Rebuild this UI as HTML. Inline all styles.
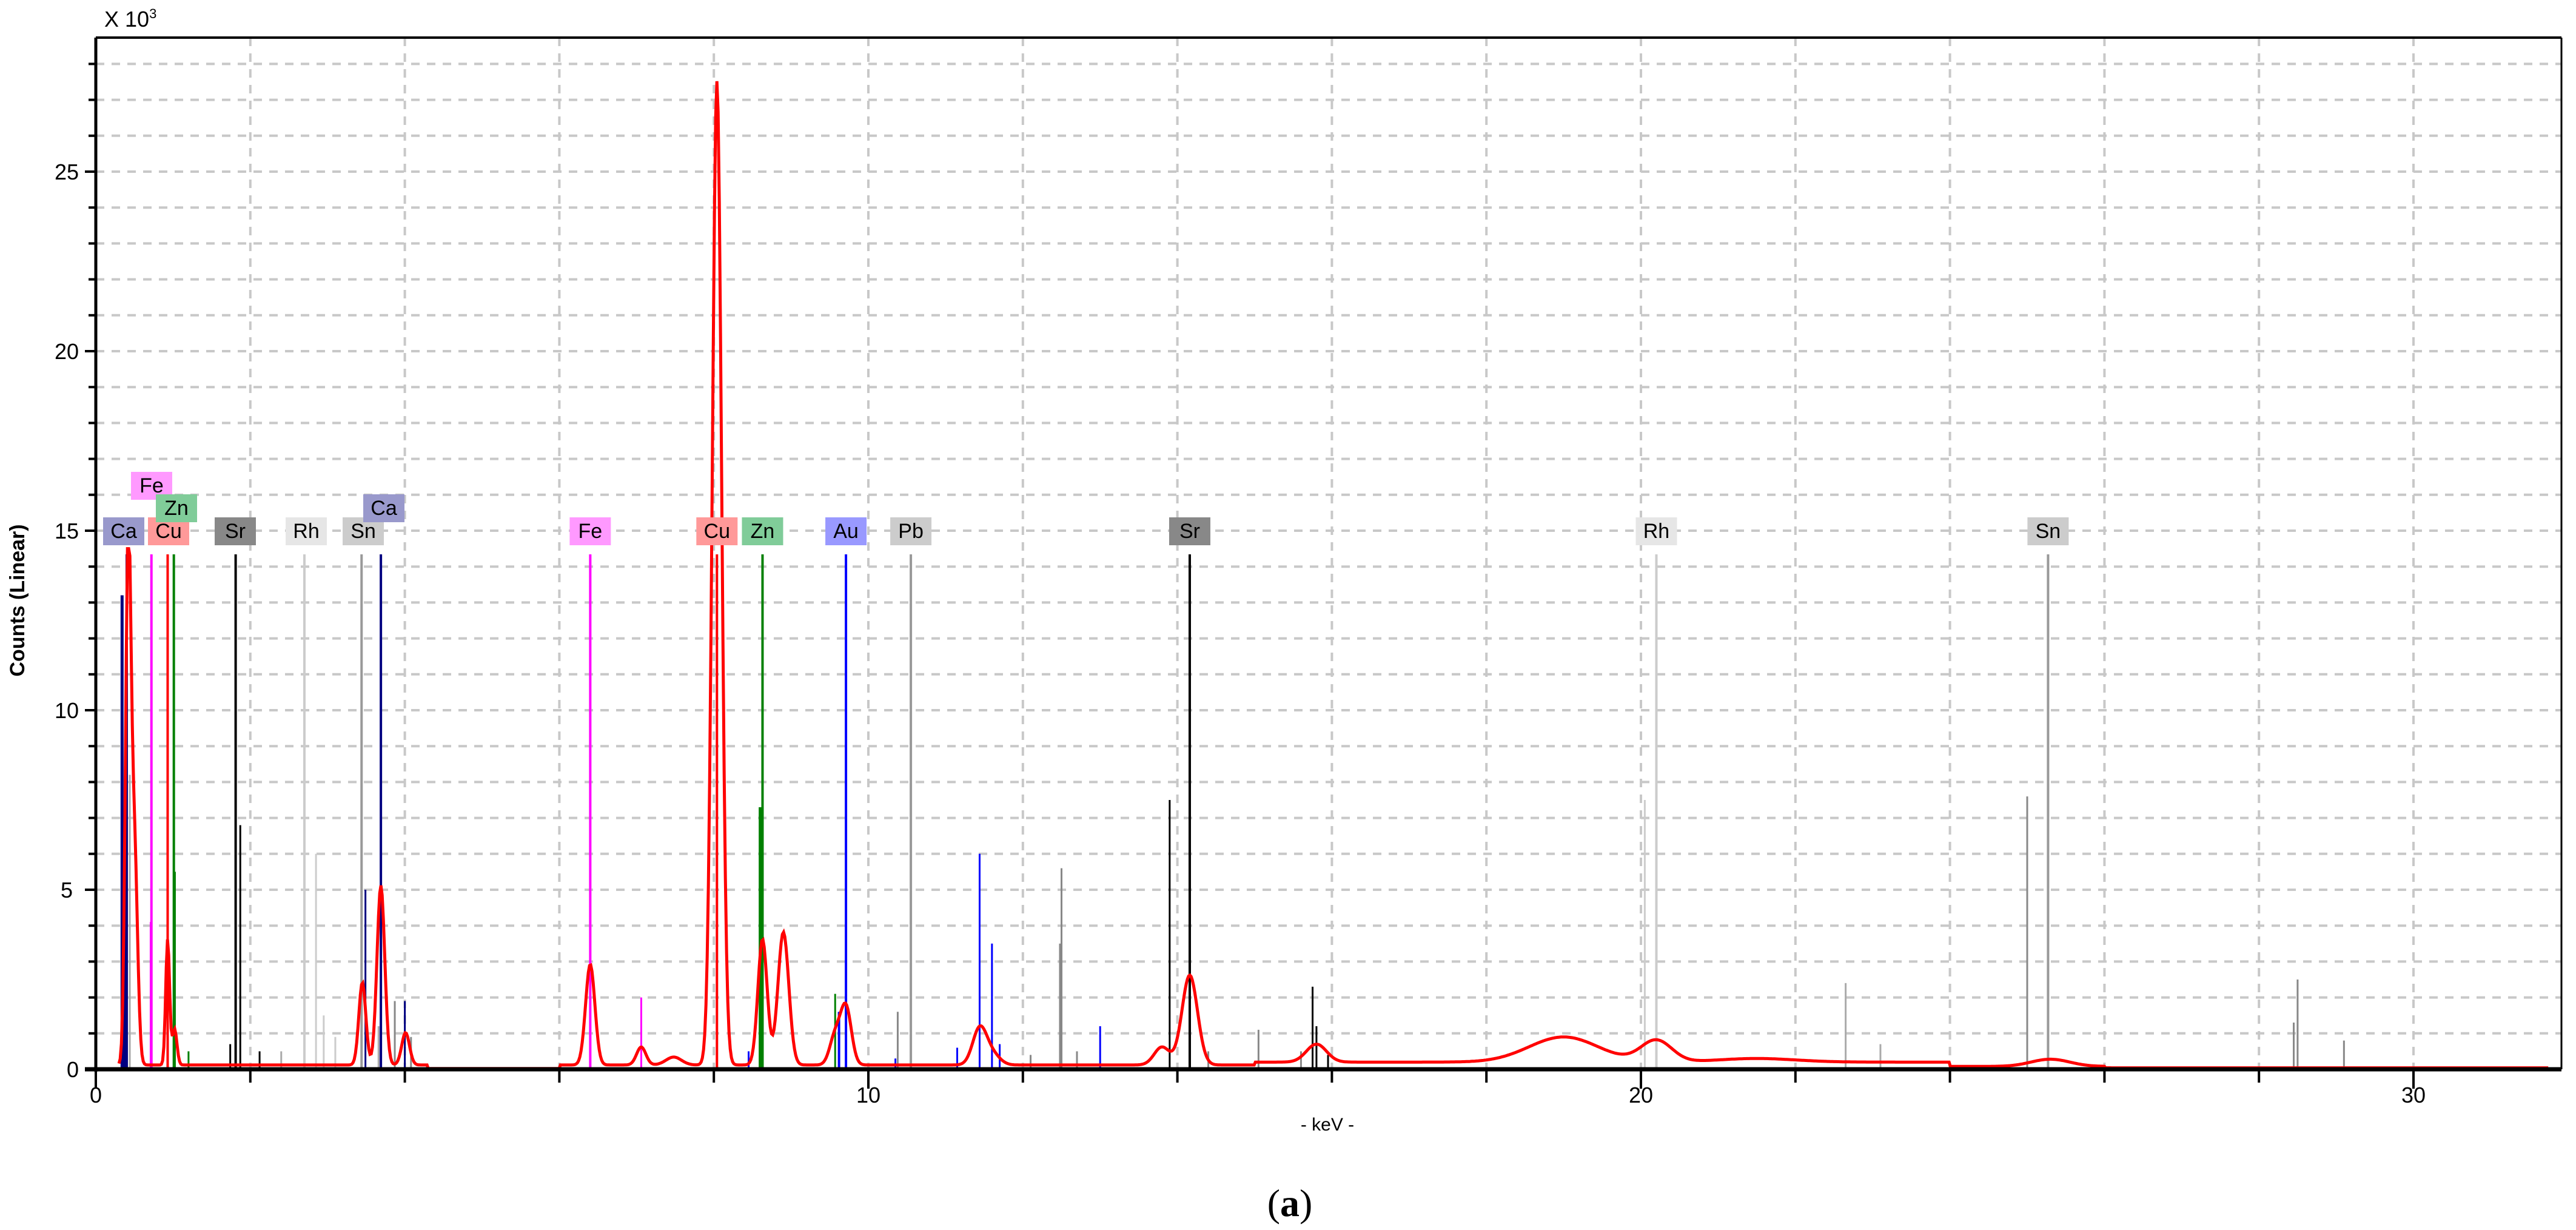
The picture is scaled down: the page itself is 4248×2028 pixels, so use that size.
<!DOCTYPE html>
<html><head><meta charset="utf-8">
<style>
html,body{margin:0;padding:0;background:#fff;}
body{width:4248px;height:2028px;overflow:hidden;}
svg{display:block;}
</style></head>
<body>
<svg id="s" width="4248" height="2028" viewBox="0 0 4248 2028" xmlns="http://www.w3.org/2000/svg" font-family="'Liberation Sans', sans-serif">
<g id="grid" stroke="#c8c8c8" stroke-width="4" stroke-dasharray="14,12"></g>
<g id="stems"></g>
<path id="spec" fill="none" stroke="#ff0000" stroke-width="5"/>
<g id="labels" font-size="34" text-anchor="middle"></g>
<g id="axes" stroke="#000"></g>
<text x="172" y="44" font-size="36">X 10<tspan font-size="22" dy="-14">3</tspan></text>
<text transform="translate(40,990) rotate(-90)" font-size="34" font-weight="bold" text-anchor="middle">Counts (Linear)</text>
<text x="2189" y="1864" font-size="30" text-anchor="middle">- keV -</text>
<text x="2127" y="2005" font-size="64" text-anchor="middle" font-family="'Liberation Serif', serif">(<tspan font-weight="bold">a</tspan>)</text>
</svg>
<script>
(function(){
var NS="http://www.w3.org/2000/svg";
var X0=158,KX=127.4,Y0=1763,KY=59.2,L=158,R=4224,T=62;
function X(k){return X0+k*KX;} function Y(c){return Y0-c*KY;}
function el(p,n,a,t){var e=document.createElementNS(NS,n);for(var k in a)e.setAttribute(k,a[k]);if(t!=null)e.textContent=t;document.getElementById(p).appendChild(e);return e;}
for(var c=1;c<=28;c++){var y=Y(c);if(y<T+5)continue;el("grid","line",{x1:L,y1:y,x2:R,y2:y});}
for(var k=2;k<=32;k+=2){var x=X(k);if(x>R-5)continue;el("grid","line",{x1:x,y1:T,x2:x,y2:Y0});}
el("axes","line",{x1:L,y1:T,x2:L,y2:Y0+4,"stroke-width":5});
el("axes","line",{x1:L,y1:T,x2:R,y2:T,"stroke-width":4});
el("axes","line",{x1:R,y1:T,x2:R,y2:Y0,"stroke-width":3});
el("axes","line",{x1:140,y1:Y0,x2:R,y2:Y0,"stroke-width":7});
for(var c=1;c<=28;c++){var y=Y(c);if(y<T+5)continue;el("axes","line",{x1:(c%5==0?140:146),y1:y,x2:L,y2:y,"stroke-width":4});}
for(var k=0;k<=32;k+=2){var x=X(k);if(x>R)continue;el("axes","line",{x1:x,y1:Y0,x2:x,y2:Y0+(k%10==0?32:22),"stroke-width":4});}
[5,10,15,20,25].forEach(function(v){el("labels","text",{x:110,y:Y(v)+13,"font-size":36},v);});
el("labels","text",{x:120,y:Y0+13,"font-size":36},"0");
[0,10,20,30].forEach(function(k){el("labels","text",{x:X(k),y:1818,"font-size":36},k);});
var stems=[
[0.34,13.2,"#000080",5],[0.37,6.5,"#000080",5],[0.40,3.7,"#000",3],[0.44,8.2,"#aaa",3],
[0.71,4.1,"#ff00ff",3],[0.93,3.5,"#ff0000",3],[1.02,5.5,"#008000",4],[1.2,0.5,"#008000",3],
[1.74,0.7,"#000",3],[1.87,6.8,"#000",3],[2.12,0.5,"#000",3],[2.4,0.5,"#aaa",3],[2.85,6.0,"#ccc",3],[2.95,1.5,"#ccc",3],[3.1,0.9,"#ccc",3],
[3.49,5.0,"#000080",3],[3.66,1.2,"#aaa",3],[3.87,1.9,"#888",3],[4.0,1.9,"#000080",3],[4.08,0.9,"#888",3],
[7.06,2.0,"#ff00ff",3],[8.6,7.3,"#008000",5],[8.45,0.5,"#0000ff",3],[9.57,2.1,"#008000",3],[9.62,1.6,"#0000ff",4],
[10.38,1.6,"#888",3],[10.35,0.3,"#0000ff",3],[11.15,0.6,"#0000ff",3],[11.44,6.0,"#0000ff",3],[11.6,3.5,"#0000ff",3],[11.7,0.7,"#0000ff",3],
[12.1,0.4,"#888",3],[12.5,5.6,"#888",3],[12.48,3.5,"#888",3],[12.7,0.5,"#888",3],[13.0,1.2,"#0000ff",3],[13.9,7.5,"#000",3],[14.4,0.5,"#888",3],
[15.05,1.1,"#888",3],[15.6,0.5,"#888",3],[15.75,2.3,"#000",3],[15.8,1.2,"#000",3],[15.95,0.4,"#000",3],
[20.05,7.5,"#ccc",3],[22.65,2.4,"#aaa",3],[23.1,0.7,"#aaa",3],[25.0,7.6,"#888",3],[28.45,1.3,"#888",3],[28.5,2.5,"#888",3],[29.1,0.8,"#888",3]];
stems.forEach(function(s){el("stems","line",{x1:X(s[0]),y1:Y(s[1]),x2:X(s[0]),y2:Y0,stroke:s[2],"stroke-width":s[3]});});
var mk=[
["Ca",0.40,"#9999cc","#000080",875],["Cu",0.93,"#ff9999","#ff0000",875],["Fe",0.72,"#ff99ff","#ff00ff",800],["Zn",1.01,"#80cc99","#008000",837],
["Sr",1.81,"#888888","#000",875],["Rh",2.70,"#e6e6e6","#ccc",875],["Sn",3.44,"#cccccc","#999",875],["Ca",3.69,"#9999cc","#000080",837],
["Fe",6.40,"#ff99ff","#ff00ff",875],["Cu",8.04,"#ff9999","#ff0000",875],["Zn",8.63,"#80cc99","#008000",875],["Au",9.71,"#9999ff","#0000ff",875],
["Pb",10.55,"#cccccc","#999",875],["Sr",14.16,"#888888","#000",875],["Rh",20.2,"#e6e6e6","#ccc",875],["Sn",25.27,"#cccccc","#999",875]];
mk.forEach(function(m){var x=X(m[1]);
 el("stems","line",{x1:x,y1:914,x2:x,y2:Y0,stroke:m[3],"stroke-width":4});});
mk.forEach(function(m){var cx=X(m[1]);var cy=m[4];
 if(m[0]=="Ca"&&m[1]<1)cx=204; if(m[0]=="Cu"&&m[1]<1)cx=278; if(m[0]=="Fe"&&m[1]<1)cx=250; if(m[0]=="Zn"&&m[1]<2)cx=291;
 if(m[0]=="Sr"&&m[1]<2)cx=388; if(m[0]=="Rh"&&m[1]<3)cx=505; if(m[0]=="Sn"&&m[1]<4)cx=599; if(m[0]=="Ca"&&m[1]>3&&m[1]<4)cx=633;
 el("labels","rect",{x:cx-34,y:cy-22,width:68,height:46,fill:m[2]});
 el("labels","text",{x:cx,y:cy+12},m[0]);});
var P=[[0.42,14.6,0.035],[0.5,6,0.04],[0.93,3.5,0.025],[1.02,1.0,0.03],[3.69,5.0,0.05],[3.45,2.3,0.045],[4.01,0.9,0.05],
[6.40,2.8,0.06],[7.06,0.5,0.06],[7.48,0.22,0.1],[8.04,27.4,0.06],[8.63,3.5,0.06],[8.9,3.7,0.07],[9.57,0.8,0.07],[9.71,1.6,0.07],
[11.44,1.0,0.09],[11.6,0.3,0.1],[13.8,0.5,0.1],[14.16,2.5,0.1],[15.8,0.5,0.13],[19.0,0.7,0.45],[20.2,0.6,0.2],[21.5,0.1,0.5],[25.3,0.2,0.25]];
var d="";for(var x=X(0.3);x<=R-20;x+=2){var k=(x-X0)/KX;var c=0.12;
 if(k>15&&k<24)c=0.2;if(k>24)c=0.08;if(k>26)c=0.04;if(k<3)c=0.12;if(k>4.3&&k<6)c=0.02;
 for(var i=0;i<P.length;i++){var z=(k-P[i][0])/P[i][2];if(Math.abs(z)<6)c+=P[i][1]*Math.exp(-0.5*z*z);}
 if(k<1.5&&c>14.5)c=14.5; if(c>30)c=30; d+=(d?"L":"M")+x.toFixed(1)+" "+Y(c).toFixed(1);}
document.getElementById("spec").setAttribute("d",d);
})();
</script>
</body></html>
